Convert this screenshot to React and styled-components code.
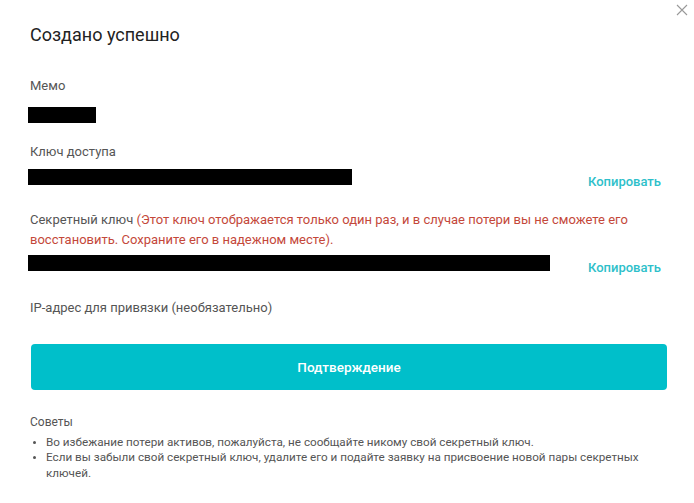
import React from 'react';
import styled, { createGlobalStyle } from 'styled-components';

const Global = createGlobalStyle`
  html, body { margin: 0; padding: 0; background: #fff; }
  body { font-family: Roboto, "Liberation Sans", Arial, sans-serif; color: #333; }
`;

const Modal = styled.div`
  position: relative;
  width: 694px;
  height: 503px;
  box-sizing: border-box;
  padding: 22px 28px 0 30px;
  background: #fff;
  overflow: hidden;
`;

const Close = styled.button`
  position: absolute;
  top: 3px;
  right: 4px;
  width: 14px;
  height: 14px;
  padding: 0;
  border: 0;
  background: none;
  cursor: pointer;
  svg { display: block; }
`;

const Title = styled.h3`
  margin: 0 0 28px;
  font-size: 18px;
  font-weight: 400;
  line-height: 26px;
  color: #222;
`;

const Field = styled.div`
  margin-bottom: ${(p) => p.$gap || 20}px;
`;

const Label = styled.div`
  font-size: 13px;
  line-height: 20px;
  color: #555;
  margin-bottom: ${(p) => p.$mb ?? 7}px;
`;

const Warn = styled.span`
  color: #c4483a;
`;

const ValueRow = styled.div`
  display: flex;
  align-items: flex-end;
  justify-content: space-between;
  margin-left: -2px;
  height: 20px;
`;

const Hidden = styled.div`
  width: ${(p) => p.$w}px;
  height: 16px;
  background: #000;
  align-self: flex-start;
`;

const Copy = styled.a`
  margin-right: 5px;
  font-size: 13px;
  font-weight: 500;
  color: #2ebfca;
  cursor: pointer;
  line-height: 14px;
`;

const Confirm = styled.button`
  display: block;
  width: 100%;
  height: 46px;
  margin: 0 0 25px 1px;
  border: 0;
  border-radius: 4px;
  background: #00bfca;
  color: #fff;
  font-family: inherit;
  font-size: 13.5px;
  font-weight: 500;
  cursor: pointer;
`;

const Tips = styled.div`
  font-size: 11.7px;
  color: #555;
  line-height: 15.5px;
`;

const TipsTitle = styled.div`
  margin-bottom: 4px;
  font-size: 12px;
`;

const List = styled.ul`
  margin: 0;
  padding-left: 16px;
  li::marker { font-size: 10px; }
`;

export default function App() {
  return (
    <>
      <Global />
      <Modal>
        <Close aria-label="close">
          <svg width="12" height="12" viewBox="0 0 12 12">
            <path d="M1 1L11 11M11 1L1 11" stroke="#999" strokeWidth="1.1" />
          </svg>
        </Close>
        <Title>Создано успешно</Title>

        <Field $gap={15}>
          <Label $mb={11}>Мемо</Label>
          <ValueRow>
            <Hidden $w={68} />
          </ValueRow>
        </Field>

        <Field $gap={21}>
          <Label>Ключ доступа</Label>
          <ValueRow>
            <Hidden $w={324} />
            <Copy>Копировать</Copy>
          </ValueRow>
        </Field>

        <Field $gap={23}>
          <Label $mb={5}>
            Секретный ключ{' '}
            <Warn>
              (Этот ключ отображается только один раз, и в случае потери вы не сможете его
              восстановить. Сохраните его в надежном месте).
            </Warn>
          </Label>
          <ValueRow>
            <Hidden $w={522} />
            <Copy>Копировать</Copy>
          </ValueRow>
        </Field>

        <Field $gap={26}>
          <Label>IP-адрес для привязки (необязательно)</Label>
        </Field>

        <Confirm>Подтверждение</Confirm>

        <Tips>
          <TipsTitle>Советы</TipsTitle>
          <List>
            <li>Во избежание потери активов, пожалуйста, не сообщайте никому свой секретный ключ.</li>
            <li>
              Если вы забыли свой секретный ключ, удалите его и подайте заявку на присвоение новой
              пары секретных ключей.
            </li>
          </List>
        </Tips>
      </Modal>
    </>
  );
}
